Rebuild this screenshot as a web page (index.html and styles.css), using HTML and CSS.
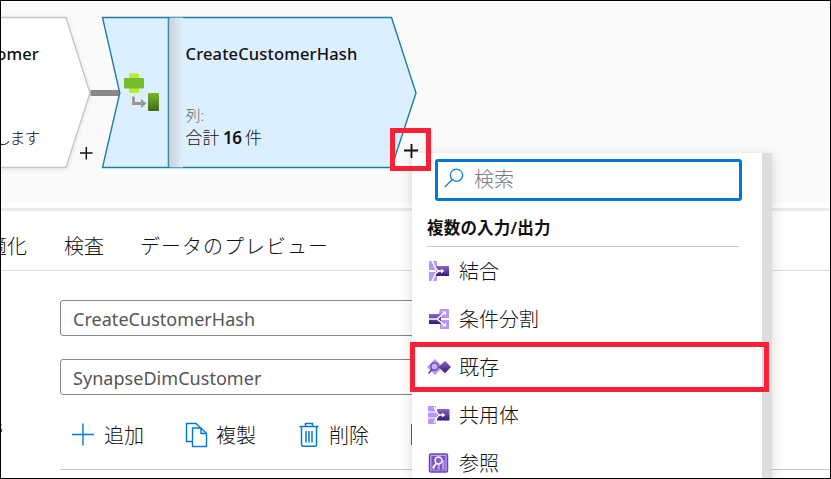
FILE: index.html
```
<!DOCTYPE html>
<html lang="ja">
<head>
<meta charset="utf-8">
<title>データ フロー</title>
<link rel="stylesheet" href="styles.css">
</head>
<body>
<div class="frame">
  <section class="canvas">
    <svg class="shapes" width="829" height="202" viewBox="1 1 829 202">
      <defs>
        <linearGradient id="fold"><stop offset="0" stop-color="#cfd3d7"/><stop offset="1" stop-color="#dceffe"/></linearGradient>
        <linearGradient id="green" x2="0" y2="1"><stop offset="0" stop-color="#76b82a"/><stop offset="1" stop-color="#3f6716"/></linearGradient>
        <filter id="soft" x="-10%" y="-10%" width="120%" height="120%"><feDropShadow dx="0" dy="1" stdDeviation="2" flood-opacity=".1"/></filter>
      </defs>
      <path d="M-5 17.500H66L90 93L66 167.500H-5Z" fill="#fff" stroke="#c6c6c6" stroke-width="1.400" filter="url(#soft)"/>
      <path d="M90.500 90H119V96H90.500Z" fill="#8a8886"/>
      <path d="M102.500 17.500H391.500L416 93L391.500 167.500H102.500L119.800 93Z" fill="#dceffe" stroke="#1b7fa3" stroke-width="1.400"/>
      <path d="M170 17H183V168H170Z" fill="url(#fold)"/>
      <path d="M170 17.500H183M170 167.500H183" stroke="#1b7fa3" stroke-opacity=".65"/>
      <path d="M168.500 17V168" stroke="#3589ab" stroke-width="1.600"/>
      <rect x="129" y="73.500" width="10" height="19.500" rx="1" fill="#b4ec36"/>
      <rect x="124" y="78" width="20" height="10.500" rx="1" fill="#76bc2d"/>
      <rect x="148" y="93" width="11" height="18" rx="1" fill="url(#green)"/>
      <path d="M133.500 96.500V103.500H142" fill="none" stroke="#999" stroke-width="2.800"/>
      <path d="M141 99L146.500 103.500L141 108Z" fill="#999"/>
      <path d="M80 153H92.500M86.300 147V159.500" stroke="#111" stroke-width="1.500"/>
    </svg>
    <div class="node node-prev"><strong>SourceCustomer</strong><span class="node-text">インポートします</span></div>
    <div class="node node-hash"><strong>CreateCustomerHash</strong><span class="label">列:</span><span class="count">合計 <b>16</b> 件</span></div>
  </section>
  <div class="splitter"></div>
  <nav class="tabs"><span class="tab tab-opt">最適化</span><span class="tab tab-check">検査</span><span class="tab tab-preview">データのプレビュー</span></nav>
  <section class="form">
    <div class="field">CreateCustomerHash</div>
    <div class="field">SynapseDimCustomer</div>
    <div class="toolbar">
      <span class="edge">s</span>
      <svg class="add" width="24" height="24" viewBox="0 0 24 24"><path d="M1 11.500H23M12 .5V22.500" stroke="#0078d4" stroke-width="1.400"/></svg>
      <span class="tool-add">追加</span>
      <svg class="copy" width="23" height="26" viewBox="0 0 23 26" fill="none" stroke="#0078d4" stroke-width="1.400"><path d="M7 19.500H1.500V1.500H11L15.500 6M7.500 6H16L21.500 11.500V24.500H7.500ZM16 6V11.500H21.500"/></svg>
      <span class="tool-copy">複製</span>
      <svg class="trash" width="20" height="26" viewBox="0 0 20 26" fill="none" stroke="#0078d4" stroke-width="1.500"><path d="M.5 4.500H19.500M6.500 4.500V1.500H13.500V4.500M2.500 4.500V22.500Q2.500 24.300 4 24.300H16Q17.500 24.300 17.500 22.500V4.500M7 9V20.500M10 9V20.500M13 9V20.500"/></svg>
      <span class="tool-delete">削除</span>
      <span class="next-tool"></span>
    </div>
  </section>

  <aside class="popup">
    <div class="menu">
      <div class="search">
        <svg width="20" height="20" viewBox="0 0 20 20" fill="none" stroke="#1683d8" stroke-width="1.300"><circle cx="12.500" cy="7.200" r="6.100"/><path d="M8.200 11.500L.8 19"/></svg>
        <span>検索</span>
      </div>
      <h2>複数の入力/出力</h2>
      <div class="item">
        <svg class="icon" viewBox="0 0 22 22"><defs><linearGradient id="purple" x2="0" y2="1"><stop offset="0" stop-color="#8f65cf"/><stop offset="1" stop-color="#341a6e"/></linearGradient></defs><path d="M2 1H10V10H2ZM2 12H10V21H2Z" fill="#b796f9"/><path d="M9 6H22V16H9Z" fill="url(#purple)"/><path d="M5 1L8.500 8Q10 11 13 11H15M5 21L8.500 14Q10 11 13 11" fill="none" stroke="#fff" stroke-width="1.500"/><path d="M14 8.700L17.500 11L14 13.300Z" fill="#fff"/></svg>
        <span>結合</span>
      </div>
      <div class="item">
        <svg class="icon" viewBox="0 0 22 22"><path d="M13 1H22V10H12V5ZM12 12H22V21H13V17Z" fill="#b796f9"/><path d="M2 6H14V16H2Z" fill="url(#purple)"/><path d="M2 11H10L17 5M10 11L17 17" fill="none" stroke="#fff" stroke-width="1.500"/><path d="M15 3.500H19V7.500ZM15 18.500H19V14.500Z" fill="#fff"/></svg>
        <span>条件分割</span>
      </div>
      <div class="item">
        <svg class="icon" viewBox="0 0 22 22"><path d="M0 11L8 3L16 11L8 19Z" fill="#b796f9"/><path d="M11.500 11L18 4.700L24 11L18 17.300Z" fill="url(#purple)"/><circle cx="7.500" cy="10.500" r="3.700" fill="#c9b1fb" stroke="#5d3c9c" stroke-width="1.300"/><path d="M5 13.500L1.500 17.500" stroke="#5d3c9c" stroke-width="1.600"/></svg>
        <span>既存</span>
      </div>
      <div class="item">
        <svg class="icon" viewBox="0 0 22 22"><rect x="1" y="2" width="8" height="5.500" rx="1" fill="#b796f9"/><rect x="1" y="8.500" width="10" height="5" rx="1" fill="#b796f9"/><rect x="1" y="14.500" width="8" height="5.500" rx="1" fill="#b796f9"/><path d="M10 5H22.500V16.500H10Z" fill="url(#purple)"/><path d="M7 3L9.500 7.500Q11 11 13 11H16M7 19L9.500 14.500Q11 11 13 11" fill="none" stroke="#fff" stroke-width="1.500"/><path d="M15 8.700L18.500 11L15 13.300Z" fill="#fff"/></svg>
        <span>共用体</span>
      </div>
      <div class="item">
        <svg class="icon" viewBox="0 0 22 22"><rect x="2.500" y="2" width="18" height="18" rx="1.500" fill="#c0a3fa" stroke="#6844ad" stroke-width="1.500"/><path d="M4.500 4H18.500V18.500H4.500Z" fill="#7954bd"/><path d="M5.500 13H8V17.500H5.500ZM10.500 12H13V17.500H10.500ZM15 8H17.500V17.500H15Z" fill="#b796f9"/><circle cx="11.500" cy="8.500" r="3.500" fill="#8661cc" stroke="#fff" stroke-width="1.400"/><path d="M9.500 11L6 16" stroke="#fff" stroke-width="1.700"/></svg>
        <span>参照</span>
      </div>
    </div>
    <div class="scrollbar"></div>
  </aside>
  <div class="mark mark-plus"><svg width="14" height="14" viewBox="0 0 14 14"><path d="M0 6.500H14M7.500 0V14" stroke="#111" stroke-width="1.800"/></svg></div>
  <div class="mark mark-item"></div>
</div>
</body>
</html>
```
FILE: styles.css
```
* { box-sizing: border-box; }
body { margin: 0; font-family: "Noto Sans", "Noto Sans CJK JP", sans-serif; color: #111; }
.frame { position: relative; width: 831px; height: 479px; border: 1px solid #000; background: #fff; overflow: hidden; white-space: nowrap; }
.canvas { position: relative; height: 202px; background: #fafafa; overflow: hidden; }
.shapes { display: block; }
.node { position: absolute; display: flex; flex-direction: column; }
.node strong { font-size: 16.5px; line-height: 24px; font-weight: 500; letter-spacing: .15px; }
.node-prev { right: 791px; top: 41px; align-items: flex-end; }
.node-text { margin-top: 60px; font-size: 16px; line-height: 24px; font-weight: 300; letter-spacing: -1.3px; }
.node-hash { left: 184.5px; top: 41px; }
.label { margin-top: 37px; color: #666; font-size: 15px; line-height: 24px; font-weight: 300; }
.count { font-size: 17px; line-height: 24px; font-weight: 300; margin-top: -1px; word-spacing: -1px; }
.count b { font-weight: 600; letter-spacing: -.4px; }
.splitter { height: 8px; border-top: 5px solid #fff; background: #ebebeb; }
.tabs { display: flex; align-items: center; height: 60px; border-bottom: 1px solid #ddd; padding-top: 9px; font-size: 20px; font-weight: 300; }
.tab-opt { margin-left: -34px; width: 97px; }
.tab-check { width: 76px; }
.tab-preview { letter-spacing: 1px; }
.form { padding: 29px 0 0 59px; }
.field { width: 600px; height: 36px; margin-bottom: 23px; border: 1px solid #858585; border-radius: 3px; padding-left: 12px; line-height: 36px; font-size: 18px; letter-spacing: .04px; color: #555; }
.toolbar { display: flex; align-items: center; height: 75px; margin-top: -23px; border-bottom: 1px solid #c8c8c8; padding-top: 5px; font-size: 20px; font-weight: 300; }
.edge { width: 10px; margin-left: -65px; margin-right: 55px; font-size: 16px; line-height: 16px; font-weight: 400; position: relative; top: -8px; }
.toolbar svg { flex: none; }
.add { margin-left: 11px; }
.tool-add { margin-left: 9px; width: 81px; }
.tool-copy { margin-left: 8px; width: 83px; }
.tool-delete { margin-left: 10px; width: 82px; }
.next-tool { width: 12px; height: 21px; background: #a64d91; border-left: 1px solid #0078d4; }
.popup { position: absolute; left: 411px; top: 152px; width: 360px; height: 326px; display: flex; background: #fff; box-shadow: 0 3px 12px rgba(0,0,0,.16); }
.menu { flex: 1; padding: 6px 0 0 15px; }
.scrollbar { width: 10px; background: #ddd; }
.search { display: flex; align-items: center; gap: 10px; width: 307px; height: 42px; margin-left: 8px; padding: 0 0 4px 6px; border: 3px solid #0078d4; border-radius: 3px; color: #777; font-size: 20px; font-weight: 300; }
h2 { width: 312px; height: 46px; margin: 0; border-bottom: 1px solid #c8c8c8; padding-top: 8px; font-size: 16.5px; line-height: 37px; font-weight: 600; letter-spacing: .2px; }
.item { display: flex; align-items: center; height: 48px; font-size: 20px; font-weight: 300; }
.item span { margin-top: -2px; }
.icon { width: 22px; height: 22px; margin-right: 10px; overflow: visible; }
.mark { position: absolute; border: 5px solid #fc2036; }
.mark-plus { left: 389px; top: 127px; width: 41px; height: 43px; padding: 11px 0 0 9px; }
.mark-plus svg { display: block; }
.mark-item { left: 409px; top: 341px; width: 359px; height: 50px; }
```
